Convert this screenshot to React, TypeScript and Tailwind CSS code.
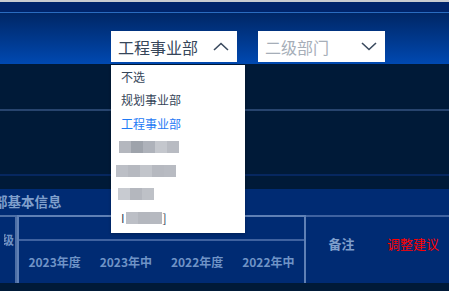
import React from "react";

const cjk = { fontFamily: '"Noto Sans CJK SC", "Noto Sans", sans-serif' };

function Chevron({ up }: { up?: boolean }) {
  return (
    <svg width="16" height="9" viewBox="0 0 16 9" fill="none">
      <path
        d={up ? "M1 8 L8 1.5 L15 8" : "M1 1 L8 7.5 L15 1"}
        stroke="#3a4a5e"
        strokeWidth="1.6"
      />
    </svg>
  );
}

function Blur({ cells }: { cells: string[] }) {
  return (
    <div className="flex h-[12px]">
      {cells.map((c, i) => (
        <div key={i} className="h-full w-[12px]" style={{ background: c }} />
      ))}
    </div>
  );
}

export default function App() {
  return (
    <div className="relative w-[449px] h-[291px] overflow-hidden bg-[#001a38]" style={cjk}>
      {/* top bar */}
      <div className="flex flex-col h-[64px]">
        <div className="h-[2px] bg-[#c9cbd0]" />
        <div className="h-[10px] bg-[#00246a]" />
        <div className="h-[1px] bg-[#2a6cc0]" />
        <div className="flex-1 bg-gradient-to-b from-[#002766] to-[#0049b2] pt-[18px] pl-[111px] flex gap-[21px] items-start">
          <div className="w-[126px] h-[31px] bg-white flex items-center justify-between pl-[7px] pr-[8px]">
            <span className="text-[16px] leading-none text-[#36465a]">工程事业部</span>
            <Chevron up />
          </div>
          <div className="w-[127px] h-[31px] bg-white flex items-center justify-between pl-[7px] pr-[8px]">
            <span className="text-[16px] leading-none text-[#a6aeb8]">二级部门</span>
            <Chevron />
          </div>
        </div>
      </div>

      {/* dark area */}
      <div className="h-[45px]" />
      <div className="h-[2px] bg-[#27446e]" />
      <div className="h-[63px]" />
      <div className="h-[2px] bg-[#06275f]" />
      <div className="h-[13px]" />

      {/* panel */}
      <div className="bg-[#002b73] h-[94px] flex flex-col">
        <div className="h-[26px] flex items-center">
          <span className="ml-[-6px] text-[13.5px] font-bold text-[#7f9fcc] leading-none">部基本信息</span>
        </div>
        <div className="flex flex-1 text-[#6f93c6] text-[12px] font-bold">
          <div className="w-[17px] border-r-2 border-[#4d6fa6] border-t-2 flex items-start pt-[14px] justify-end pr-[1px]">
            <span className="w-[10px] overflow-hidden whitespace-nowrap flex justify-end">级</span>
          </div>
          <div className="w-[289px] border-t-2 border-x-2 border-[#5f80b5] flex flex-col">
            <div className="h-[24px] border-b-2 border-[#3f62a0]" />
            <div className="flex flex-1">
              <div className="flex-1 flex items-center justify-center">2023年度</div>
              <div className="flex-1 flex items-center justify-center">2023年中</div>
              <div className="flex-1 flex items-center justify-center">2022年度</div>
              <div className="flex-1 flex items-center justify-center">2022年中</div>
            </div>
          </div>
          <div className="flex-1 flex border-t-2 border-[#3f62a0]">
            <div className="w-[71px] flex items-center justify-center pb-[13px] text-[13px] text-[#7f9fcc]">备注</div>
            <div className="flex-1 flex items-center justify-center pb-[13px] text-[13px] font-normal text-[#ff0000]">调整建议</div>
          </div>
        </div>
      </div>

      {/* dropdown list */}
      <div className="absolute left-[111px] top-[65px] w-[134px] h-[168px] bg-white shadow-[0_1px_3px_rgba(0,0,0,0.25)] flex flex-col text-[12px] text-[#36465a]">
        <div className="h-[23.5px] flex items-center pl-[10px]">不选</div>
        <div className="h-[23.5px] flex items-center pl-[10px]">规划事业部</div>
        <div className="h-[23.5px] flex items-center pl-[10px] text-[#1f7af5]">工程事业部</div>
        <div className="h-[23.5px] flex items-center pl-[8px]">
          <Blur cells={["#b4b7be", "#9ea3ab", "#aeb2ba", "#c4c7cd", "#b8bbc2"]} />
        </div>
        <div className="h-[23.5px] flex items-center pl-[5px]">
          <Blur cells={["#bcbfc6", "#b6b9c0", "#c2c5cb", "#b6b9c0", "#b8bbc2", "#c0c3c9"].slice(0, 5)} />
        </div>
        <div className="h-[23.5px] flex items-center pl-[7px]">
          <Blur cells={["#c8cbd1", "#b4b7be", "#bec1c7"]} />
        </div>
        <div className="h-[23.5px] flex items-center pl-[10px] gap-[1px]">
          <span className="text-[#36465a] leading-none">I</span>
          <Blur cells={["#bcbfc6", "#b4b7be", "#b6b9c0", "#d0d3d8"].slice(0, 3)} />
          <span className="text-[#36465a] leading-none">]</span>
        </div>
      </div>
    </div>
  );
}
